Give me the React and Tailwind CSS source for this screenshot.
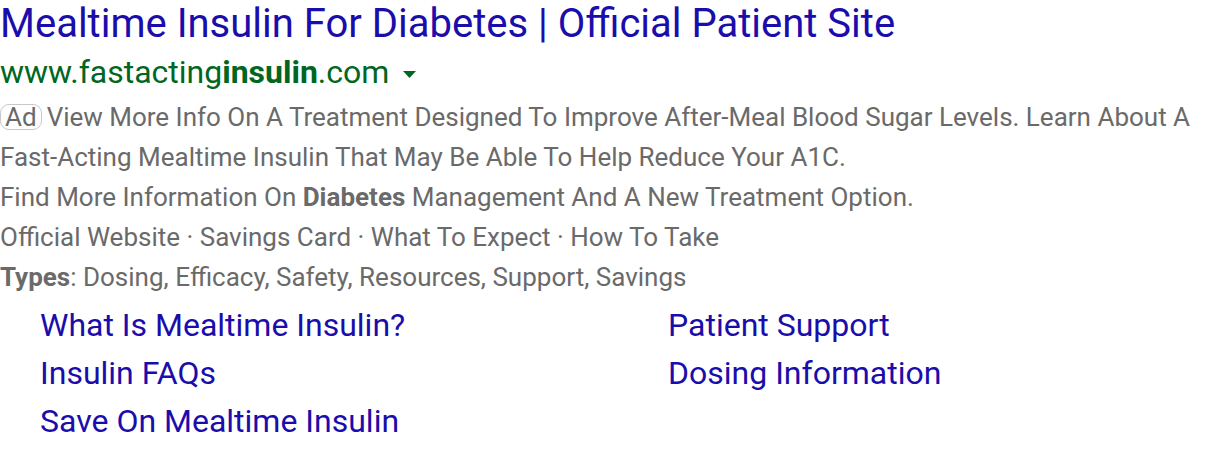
import React from "react";

const sitelinks = [
  ["What Is Mealtime Insulin?", "Patient Support"],
  ["Insulin FAQs", "Dosing Information"],
  ["Save On Mealtime Insulin", ""],
];

const App = () => {
  return (
    <div className="w-[1216px] h-[450px] bg-white overflow-hidden font-['Roboto',sans-serif]">
      {/* Headline */}
      <h1 className="text-[40px] leading-[47px] text-[#1a0dab] whitespace-nowrap">
        Mealtime Insulin For Diabetes | Official Patient Site
      </h1>

      {/* Display URL */}
      <div className="flex items-center text-[32px] leading-[50px] text-[#006621] whitespace-nowrap">
        <span>
          www.fastacting<b className="font-bold">insulin</b>.com
        </span>
        <svg className="ml-[14px] mt-[4px]" width="13" height="7" viewBox="0 0 13 7">
          <path d="M0 0 L13 0 L6.5 7 Z" fill="#006621" />
        </svg>
      </div>

      {/* Description */}
      <div className="text-[26px] leading-[40px] text-[#6a6a6a] whitespace-nowrap">
        <p>
          <span className="inline-block border border-[#c8c8c8] rounded-[9px] px-[4px] leading-[24px] mr-[5px] text-[#6a6a6a]">
            Ad
          </span>
          View More Info On A Treatment Designed To Improve After-Meal Blood Sugar Levels. Learn About A
        </p>
        <p>Fast-Acting Mealtime Insulin That May Be Able To Help Reduce Your A1C.</p>
        <p>
          Find More Information On <b className="font-bold">Diabetes</b> Management And A New Treatment Option.
        </p>
        <p>Official Website · Savings Card · What To Expect · How To Take</p>
        <p>
          <b className="font-bold">Types</b>: Dosing, Efficacy, Safety, Resources, Support, Savings
        </p>
      </div>

      {/* Sitelinks */}
      <div className="pl-[40px] pt-[4px]">
        {sitelinks.map(([left, right], i) => (
          <div key={i} className="flex text-[32px] leading-[48px] text-[#1a0dab] whitespace-nowrap">
            <span className="w-[628px]">{left}</span>
            <span>{right}</span>
          </div>
        ))}
      </div>
    </div>
  );
};

export default App;
